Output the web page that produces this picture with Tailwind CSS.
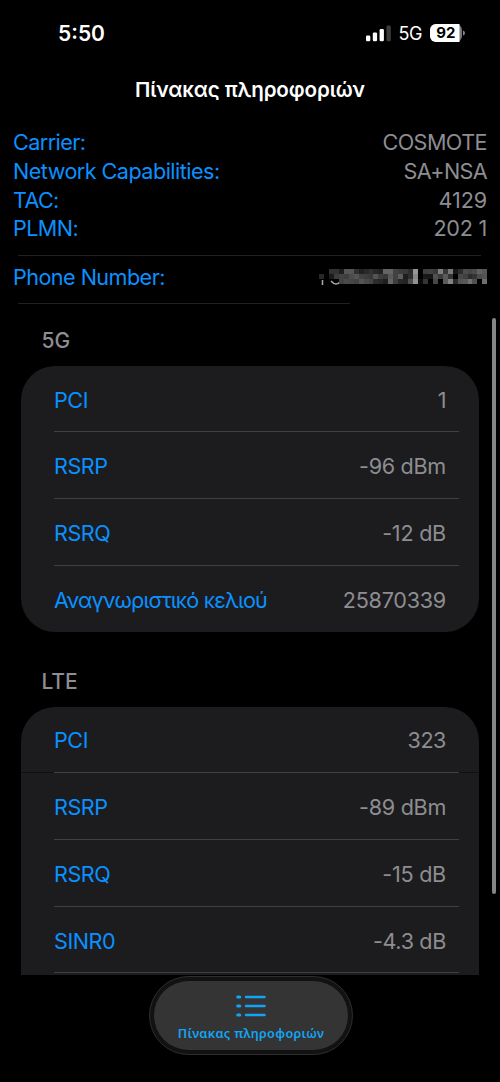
<!DOCTYPE html>
<html lang="el"><head><meta charset="utf-8"><title>Πίνακας πληροφοριών</title>
<script src="https://cdn.jsdelivr.net/npm/@tailwindcss/browser@4"></script></head>
<body class="bg-black">
<div class="relative flex h-[1082px] w-[500px] flex-col overflow-hidden bg-black font-['Inter','Noto_Sans',sans-serif] text-[21.600px] leading-[28px] tracking-[-0.45px] text-[#8d8d92]">
<header class="flex h-[66px] shrink-0 items-center justify-between pr-[34px] pl-[58px] text-white">
<span class="pt-[2px] text-[21px] font-semibold tracking-normal">5:50</span>
<div class="flex items-center">
<svg class="mr-[8px]" width="25" height="17" viewBox="0 0 25 17"><g fill="#fff"><rect x="0" y="10.500" width="4.300" height="5.800" rx="1.300"/><rect x="6.800" y="7.500" width="4.300" height="8.800" rx="1.300"/><rect x="13.600" y="4" width="4.300" height="12.300" rx="1.300"/></g><rect x="20.500" y="0.500" width="4.300" height="15.800" rx="1.300" fill="#3b3b3b"/></svg>
<span class="mr-[8px] pt-[2px] text-[18px] tracking-tight">5G</span>
<svg width="36" height="18" viewBox="0 0 36 18"><rect width="32" height="18" rx="6" fill="#777"/><path d="M6 0H29.500V18H6A6 6 0 0 1 0 12V6A6 6 0 0 1 6 0Z" fill="#fff"/><path d="M33 6.500Q35 7 35 9T33 11.500Z" fill="#888"/><text x="15.800" y="14.300" text-anchor="middle" font-size="15" font-weight="700" letter-spacing="0">92</text></svg>
</div></header>
<h1 class="h-[62px] shrink-0 pt-[9px] text-center text-[20.600px] leading-[30px] font-semibold tracking-[-0.12px] text-white">Πίνακας πληροφοριών</h1>
<dl class="grid shrink-0 auto-rows-[28.700px] grid-cols-[auto_1fr] items-center px-[13px]">
<dt class="text-[#0a91ff] tracking-[-0.560px]">Carrier:</dt><dd class="text-right tracking-[-0.550px]">COSMOTE</dd>
<dt class="text-[#0a91ff] tracking-[-0.530px]">Network Capabilities:</dt><dd class="text-right tracking-[-0.650px]">SA+NSA</dd>
<dt class="text-[#0a91ff] tracking-[-0.650px]">TAC:</dt><dd class="text-right tracking-[-0.100px]">4129</dd>
<dt class="text-[#0a91ff] tracking-[-0.600px]">PLMN:</dt><dd class="text-right tracking-[-0.250px]">202 1</dd></dl>
<div class="mt-[12px] mr-[19px] ml-[18px] h-px shrink-0 bg-[#202022]"></div>
<div class="flex h-[47px] shrink-0 items-center justify-between pr-[12px] pl-[13px]">
<span class="-mt-[5px] tracking-[-0.550px] text-[#0a91ff]">Phone Number:</span>
<svg class="-mt-[4px]" width="169" height="17" viewBox="0 0 169 17" aria-hidden="true"><path d="M3.500 11V16M12 12Q17 18 22 12" fill="none" stroke="#aaa" stroke-width="1.500"/><g id="mosaic" shape-rendering="crispEdges"></g></svg>
</div>
<div class="ml-[18px] h-px w-[332px] shrink-0 bg-[#202022]"></div>
<main class="flex h-[671px] shrink-0 flex-col overflow-hidden px-[21px]">
<h2 class="h-[62px] shrink-0 pt-[23px] pl-[20.500px] text-[21px] font-medium tracking-[0.050px]">5G</h2>
<section class="shrink-0 rounded-[34px] bg-[#1c1c1e] pr-[20px] pl-[33px]">
<div class="flex h-[66.700px] items-center justify-between border-b-[1.500px] border-[#404042] pt-[2px] pr-[13px]"><span class="text-[#0a91ff]">PCI</span><span>1</span></div>
<div class="flex h-[66.700px] items-center justify-between border-b-[1.500px] border-[#404042] pt-[2px] pr-[13px]"><span class="text-[#0a91ff]">RSRP</span><span class="tracking-[-0.300px]">-96 dBm</span></div>
<div class="flex h-[66.700px] items-center justify-between border-b-[1.500px] border-[#404042] pt-[2px] pr-[13px]"><span class="text-[#0a91ff]">RSRQ</span><span class="tracking-[-0.250px]">-12 dB</span></div>
<div class="flex h-[66.300px] items-center justify-between pt-[2px] pr-[13px]"><span class="tracking-[-0.850px] text-[#0a91ff]">Αναγνωριστικό κελιού</span><span class="tracking-[-0.250px]">25870339</span></div>
</section>
<h2 class="h-[74.600px] shrink-0 pt-[36px] pl-[20.500px] text-[21px] font-medium tracking-[-0.100px]">LTE</h2>
<section class="shrink-0 rounded-t-[34px] bg-[#1c1c1e] pr-[20px] pl-[33px]">
<div class="relative flex h-[66.700px] items-center justify-between border-b-[1.500px] border-[#404042] pt-px pr-[13px]"><span class="text-[#0a91ff]">PCI</span><span>323</span><i class="absolute -bottom-px -left-[33px] h-px w-[33px] bg-[#101011]"></i><i class="absolute -right-[20px] -bottom-px h-px w-[20px] bg-[#101011]"></i></div>
<div class="flex h-[66.700px] items-center justify-between border-b-[1.500px] border-[#404042] pt-[2px] pr-[13px]"><span class="text-[#0a91ff]">RSRP</span><span class="tracking-[-0.300px]">-89 dBm</span></div>
<div class="flex h-[66.700px] items-center justify-between border-b-[1.500px] border-[#404042] pt-[2px] pr-[13px]"><span class="text-[#0a91ff]">RSRQ</span><span class="tracking-[-0.250px]">-15 dB</span></div>
<div class="flex h-[66.700px] items-center justify-between border-b-[1.500px] border-[#404042] pt-[2px] pr-[13px]"><span class="text-[#0a91ff]">SINR0</span><span class="tracking-[-0.350px]">-4.3 dB</span></div>
<div class="h-[10px]"></div>
</section>
</main>
<div class="absolute top-[318px] left-[492px] h-[576px] w-[4px] rounded-full bg-[#858585]"></div>
<nav class="absolute top-[976px] left-[149px] h-[79px] w-[204px] rounded-full border border-[#2e2e2e] bg-[#121212] p-[4px]">
<div class="flex h-full flex-col items-center rounded-full bg-[#343434] pt-[14px] text-[#12a5f5]">
<svg width="30" height="22" viewBox="0 0 30 22" fill="none" stroke="currentColor" stroke-width="2.500" stroke-linecap="round"><path d="M10 2H28.500M10 11H28.500M10 20H28.500"/><path stroke-width="3.200" d="M1.800 2H3.700M1.800 11H3.700M1.800 20H3.700"/></svg>
<span class="mt-[7px] font-['Noto_Sans',sans-serif] text-[12.600px] leading-[20px] font-semibold tracking-[0.350px]">Πίνακας πληροφοριών</span>
</div></nav>
</div>
<script>
const shades = [
 [0,0,50,50,30,85,85,48,34,42,50,40,34,100,100,66,60,56,44,150,0,62,66,56,125,56,120,24,44,76,70,76,98,88],
 [40,0,26,60,66,62,76,84,66,62,56,84,62,56,90,66,92,30,46,135,0,24,22,80,60,90,52,0,72,64,44,52,76,84],
 [0,0,0,0,66,74,70,66,84,74,68,44,40,30,100,62,40,36,78,145,12,52,0,70,0,90,130,42,84,88,112,80,0,110]];
document.getElementById('mosaic').innerHTML = shades.map((row, y) => row.map((v, x) =>
  v ? `<rect x="${x*4.95}" y="${y*5}" width="5" height="5" fill="rgb(${v},${v},${v})"/>` : '').join('')).join('');
</script>
</body></html>
